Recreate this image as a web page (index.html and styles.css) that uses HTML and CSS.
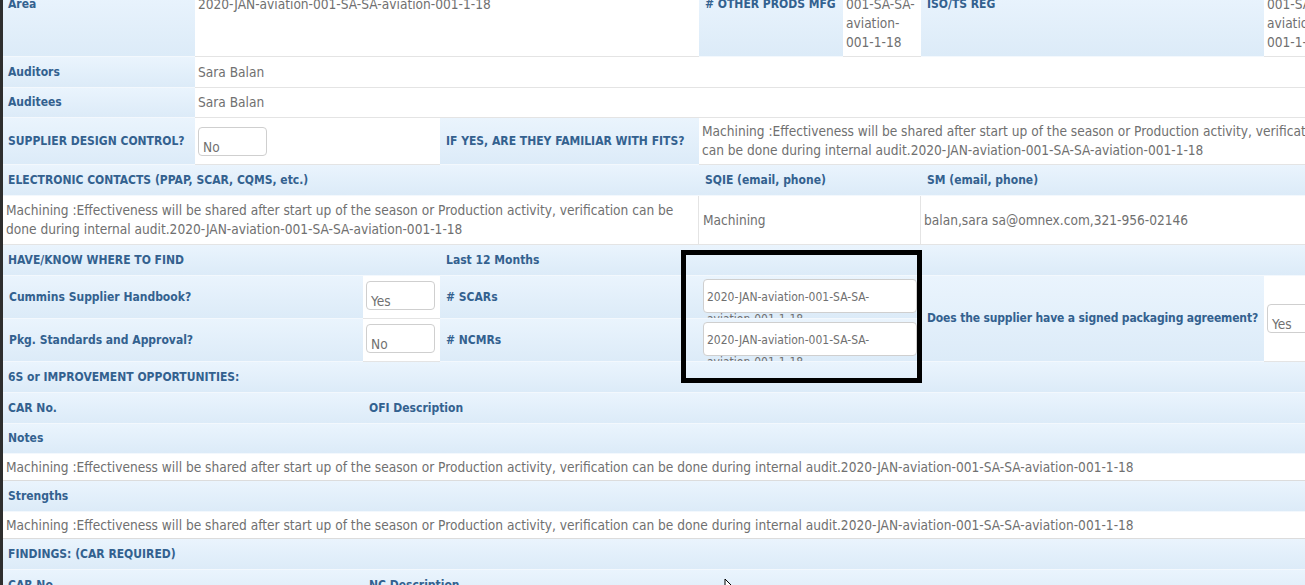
FILE: index.html
```html
<!DOCTYPE html>
<html lang="en">
<head>
  <meta charset="UTF-8" />
  <title>Supplier Audit</title>
  <link rel="stylesheet" href="styles.css">
</head>
<body>
  <div class="sheet">

    <div class="row row-area">
      <div class="lbl top">Area</div>
      <div class="val top">2020-JAN-aviation-001-SA-SA-aviation-001-1-18</div>
      <div class="lbl top"># OTHER PRODS MFG</div>
      <div class="val top">001-SA-SA-aviation-001-1-18</div>
      <div class="lbl top">ISO/TS REG</div>
      <div class="val top">001-SA-SA-aviation-001-1-18</div>
    </div>

    <div class="row row-two">
      <div class="lbl">Auditors</div>
      <div class="val">Sara Balan</div>
    </div>
    <div class="row row-two h30">
      <div class="lbl">Auditees</div>
      <div class="val">Sara Balan</div>
    </div>

    <div class="row row-design">
      <div class="lbl">SUPPLIER DESIGN CONTROL?</div>
      <div class="val"><div class="box box-small">No</div></div>
      <div class="lbl">IF YES, ARE THEY FAMILIAR WITH FITS?</div>
      <div class="val wrap">Machining :Effectiveness will be shared after start up of the season or Production activity, verification can be done during internal audit.2020-JAN-aviation-001-SA-SA-aviation-001-1-18</div>
    </div>

    <div class="row row-contacts head">
      <div class="lbl">ELECTRONIC CONTACTS (PPAP, SCAR, CQMS, etc.)</div>
      <div class="lbl">SQIE (email, phone)</div>
      <div class="lbl">SM (email, phone)</div>
    </div>
    <div class="row row-contacts tall">
      <div class="val wrap sep">Machining :Effectiveness will be shared after start up of the season or Production activity, verification can be done during internal audit.2020-JAN-aviation-001-SA-SA-aviation-001-1-18</div>
      <div class="val sep pad4">Machining</div>
      <div class="val">balan,sara sa@omnex.com,321-956-02146</div>
    </div>

    <div class="block">
      <div class="lbl span2">HAVE/KNOW WHERE TO FIND</div>
      <div class="lbl">Last 12 Months</div>
      <div class="lbl"></div>
      <div class="lbl"></div>
      <div class="lbl"></div>

      <div class="lbl">Cummins Supplier Handbook?</div>
      <div class="val lift"><div class="box box-small">Yes</div></div>
      <div class="lbl"># SCARs</div>
      <div class="lbl clip"><div class="box box-wide">2020-JAN-aviation-001-SA-SA-aviation-001-1-18</div></div>
      <div class="lbl rows2 nowrap tight">Does the supplier have a signed packaging agreement?</div>
      <div class="val rows2"><div class="box box-small">Yes</div></div>

      <div class="lbl">Pkg. Standards and Approval?</div>
      <div class="val lift"><div class="box box-small">No</div></div>
      <div class="lbl"># NCMRs</div>
      <div class="lbl clip"><div class="box box-wide">2020-JAN-aviation-001-SA-SA-aviation-001-1-18</div></div>
    </div>

    <div class="row head">
      <div class="lbl">6S or IMPROVEMENT OPPORTUNITIES:</div>
    </div>
    <div class="row row-car head">
      <div class="lbl">CAR No.</div>
      <div class="lbl">OFI Description</div>
    </div>
    <div class="row head h30">
      <div class="lbl">Notes</div>
    </div>
    <div class="row line">
      <div class="val">Machining :Effectiveness will be shared after start up of the season or Production activity, verification can be done during internal audit.2020-JAN-aviation-001-SA-SA-aviation-001-1-18</div>
    </div>
    <div class="row head">
      <div class="lbl">Strengths</div>
    </div>
    <div class="row line">
      <div class="val">Machining :Effectiveness will be shared after start up of the season or Production activity, verification can be done during internal audit.2020-JAN-aviation-001-SA-SA-aviation-001-1-18</div>
    </div>
    <div class="row head">
      <div class="lbl">FINDINGS: (CAR REQUIRED)</div>
    </div>
    <div class="row row-car head">
      <div class="lbl">CAR No.</div>
      <div class="lbl">NC Description</div>
    </div>

    <div class="mark"></div>
    <svg class="cursor" width="12" height="18" viewBox="0 0 12 18">
      <path d="M1 1 L1 14 L4 11 L6.5 16.5 L8.5 15.5 L6 10 L10 10 Z" fill="#fff" stroke="#000" stroke-width="1"/>
    </svg>
  </div>
</body>
</html>
```

FILE: styles.css
```css
html, body {
  margin: 0;
  padding: 0;
  overflow: hidden;
}

body {
  background-color: #2e2e2e;
  font-family: "DejaVu Sans Condensed", "DejaVu Sans", sans-serif;
  font-stretch: condensed;
  font-size: 13.6px;
  line-height: 19px;
  color: #707070;
}

.sheet {
  position: relative;
  width: 1340px;
  margin: -11px 0 0 3px;
  background: #fff;
}

.row {
  display: grid;
  grid-template-columns: 1fr;
  height: 31px;
}

.h30 { height: 30px; }

.row-area {
  grid-template-columns: 192px 504px 144px 78px 343px 1fr;
  height: 68px;
}

.row-two { grid-template-columns: 192px 1fr; }

.row-design {
  grid-template-columns: 192px 245px 259px 1fr;
  height: 47px;
}

.row-contacts { grid-template-columns: 696px 222px 1fr; }
.row-contacts.tall { height: 49px; }

.row-car { grid-template-columns: 360px 1fr; }

.lbl, .val {
  display: flex;
  align-items: center;
  overflow: hidden;
  box-sizing: border-box;
}

.lbl {
  background: linear-gradient(#eaf4fd, #dcebf8);
  color: #33618f;
  font-weight: bold;
  font-size: 12px;
  padding: 0 6px;
  border-bottom: 1px solid #f3f8fd;
}

.row > .lbl:first-child,
.block > .lbl:nth-child(6n+1) {
  padding-left: 5px;
}

.nowrap { white-space: nowrap; }
.tight { letter-spacing: -0.15px; }

.val {
  background: #fff;
  padding: 0 3px;
  border-bottom: 1px solid #e4e4e4;
}

.wrap { line-height: 19px; }
.pad4 { padding-left: 4px; }
.sep { border-right: 1px solid #e4e4e4; }

.top {
  align-items: flex-start;
  padding-top: 6px;
}

.line { height: 27px; }
.line .val {
  border-bottom: 1px solid #dcdcdc;
  box-shadow: 0 1px 1px rgba(0, 0, 0, 0.06);
}

.block {
  display: grid;
  grid-template-columns: 360px 77px 259px 222px 343px 1fr;
  grid-template-rows: 31px 43px 43px;
}

.span2 { grid-column: span 2; }
.rows2 { grid-row: span 2; }

.lift { padding-bottom: 3px; }

.clip {
  align-items: flex-start;
  padding: 3px 4px 0;
}

.box {
  box-sizing: border-box;
  background: #fff;
  border: 1px solid #cfcfcf;
  border-radius: 4px;
  color: #707070;
  font-weight: normal;
  font-size: 13.6px;
}

.box-small {
  width: 69px;
  height: 29px;
  padding: 10px 4px 0;
  line-height: 19px;
}

.box-wide {
  width: 214px;
  height: 34px;
  padding: 6px 3px 0;
  line-height: 22px;
  font-size: 12px;
}

.mark {
  position: absolute;
  left: 678px;
  top: 261px;
  width: 241px;
  height: 133px;
  box-sizing: border-box;
  border: 5px solid #000;
}

.cursor {
  position: absolute;
  left: 721px;
  top: 589px;
}
```
